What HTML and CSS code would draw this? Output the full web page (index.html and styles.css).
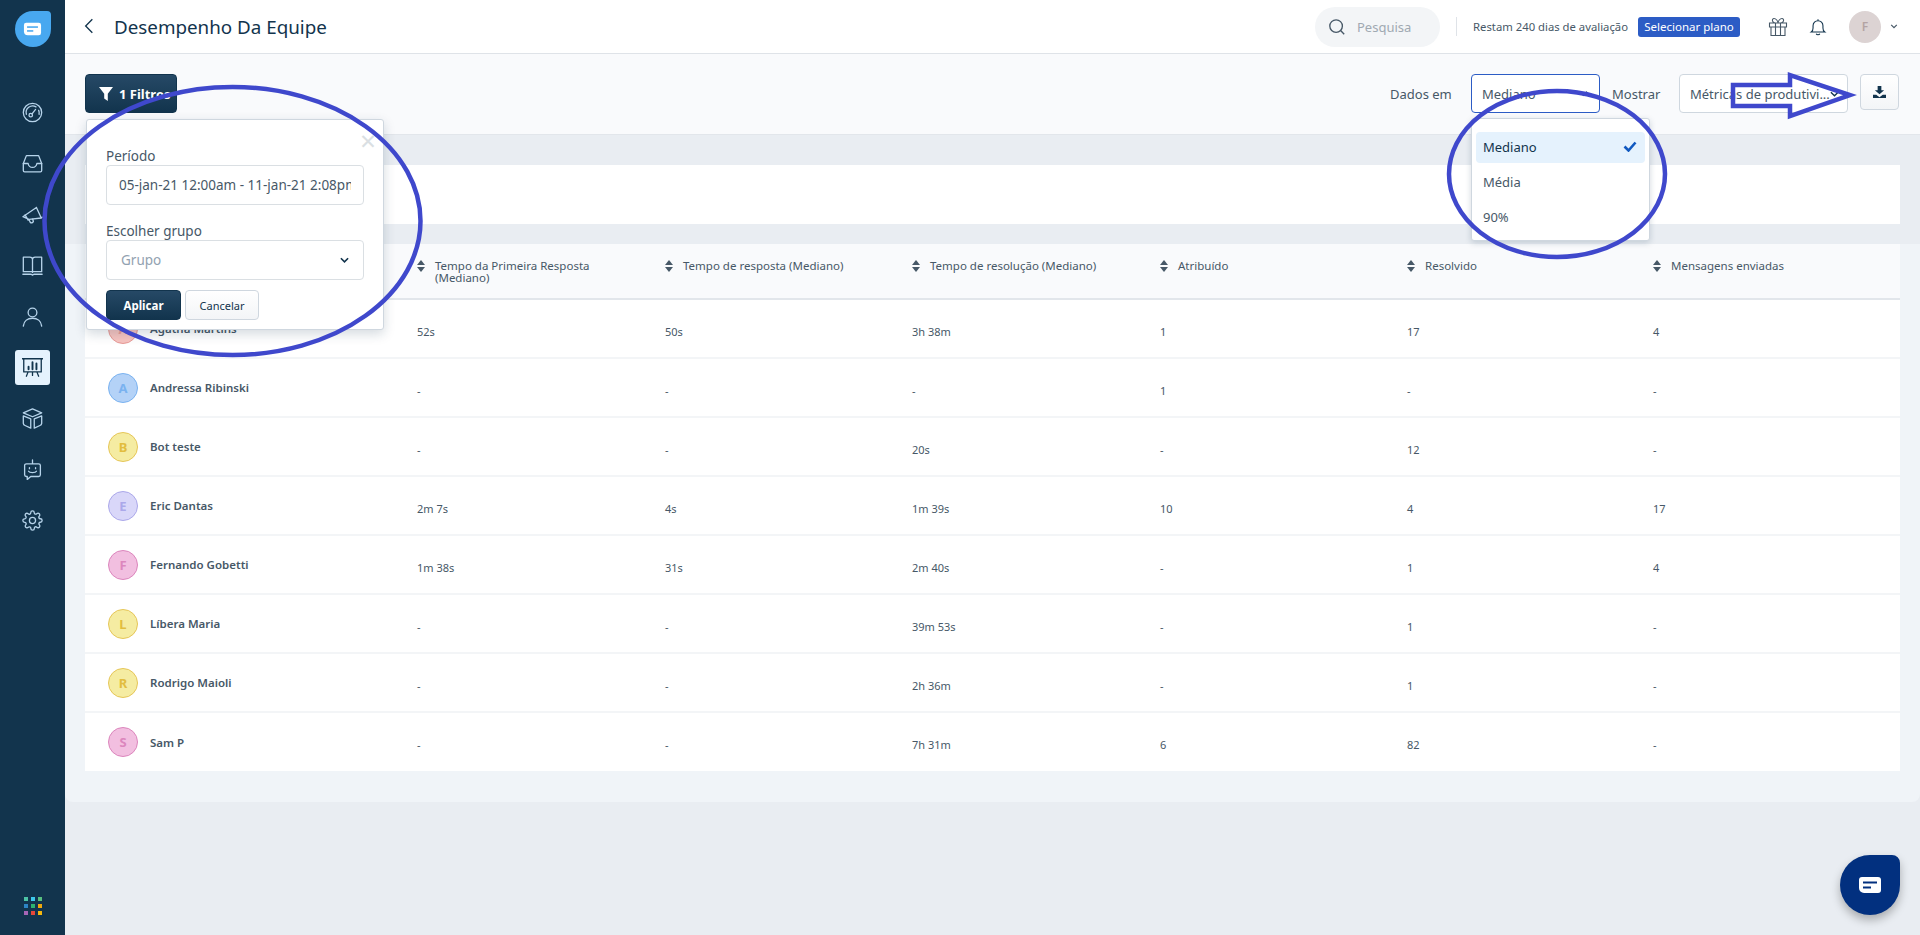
FILE: index.html
```html
<!DOCTYPE html>
<html lang="pt">
<head>
<meta charset="utf-8">
<title>Desempenho Da Equipe</title>
<link rel="stylesheet" href="styles.css">
</head>
<body>
<div class="app">
  <aside class="sidebar">
    <div class="logo">
      <svg viewBox="0 0 24 18" class="logo-bubble"><path d="M4 1h16a3 3 0 0 1 3 3v10a3 3 0 0 1-3 3H6a5 5 0 0 1-5-5V4a3 3 0 0 1 3-3z" fill="#fff"/><path d="M5 6.500h14" stroke="#48a8f0" stroke-width="2"/><path d="M5 11.500h8" stroke="#48a8f0" stroke-width="2"/></svg>
    </div>
    <nav class="nav">
      <a class="nav-item"><svg viewBox="0 0 24 24"><circle cx="12" cy="12" r="10.500"/><path d="M5 14a7.500 7.500 0 0 1 11-8.500M19 9.500a7.500 7.500 0 0 1 .5 4.500"/><circle cx="10" cy="15" r="2"/><path d="M11.500 13.500l4-5"/></svg></a>
      <a class="nav-item"><svg viewBox="0 0 24 24"><path d="M1.500 12l3.500-9h14l3.500 9v8a1.500 1.500 0 0 1-1.500 1.500H3A1.500 1.500 0 0 1 1.500 20z"/><path d="M1.500 12H7c.5 3 2.500 4.500 5 4.500s4.500-1.500 5-4.500h5.500"/></svg></a>
      <a class="nav-item"><svg viewBox="0 0 24 24"><path d="M1 14.500L16.500 4l5.500 12-14 1.500zM3.500 12.500l3.500 6M16.500 4l-1 1M22 16l1-1"/><path d="M8 18l1.500 3a2.200 2.200 0 0 0 3.500-1l-.8-2.800"/></svg></a>
      <a class="nav-item"><svg viewBox="0 0 24 24"><path d="M12 4.500V20M1.500 2.500H9c1.800 0 3 1 3 2.500 0-1.500 1.200-2.500 3-2.500h7.500V19H1.500z"/><path d="M1 22h9.500l1.500 1 1.500-1H23"/></svg></a>
      <a class="nav-item"><svg viewBox="0 0 24 24"><circle cx="12" cy="7.500" r="5"/><path d="M1.500 23c.5-6 5-9 10.500-9s10 3 10.500 9"/></svg></a>
      <a class="nav-item nav-active"><svg viewBox="0 0 24 24"><path d="M0 2h24M2 2v15h20V2M7 17l-2 5M17 17l2 5M12 17v4"/><path d="M7.500 14v-3M12 14V6M16.500 14V7.500" stroke-width="2.200"/></svg></a>
      <a class="nav-item"><svg viewBox="0 0 24 24"><path d="M12 1l10.500 4.500L12 10 1.500 5.500zM1.500 9L10 12.500V23L3.500 20a3 3 0 0 1-2-2.500zM22.500 9L14 12.500V23l6.500-3a3 3 0 0 0 2-2.500z"/></svg></a>
      <a class="nav-item"><svg viewBox="0 0 24 24"><path d="M12 1v4M5 5.500h14a2 2 0 0 1 2 2V18a2 2 0 0 1-2 2h-9l-4 3.500V20H5a2 2 0 0 1-2-2V7.500a2 2 0 0 1 2-2z"/><path d="M7.500 14c1 2 8 2 9 0M8.500 10v1M15.500 10v1"/></svg></a>
      <a class="nav-item"><svg viewBox="0 0 24 24"><path d="M12 15.500a3.500 3.500 0 1 0 0-7 3.500 3.500 0 0 0 0 7z"/><path d="M19.400 15a1.650 1.650 0 0 0 .33 1.820l.06.06a2 2 0 0 1 0 2.830 2 2 0 0 1-2.830 0l-.06-.06a1.650 1.650 0 0 0-1.820-.33 1.650 1.650 0 0 0-1 1.510V21a2 2 0 0 1-2 2 2 2 0 0 1-2-2v-.09A1.650 1.650 0 0 0 9 19.400a1.650 1.650 0 0 0-1.820.33l-.06.06a2 2 0 0 1-2.830 0 2 2 0 0 1 0-2.830l.06-.06a1.650 1.650 0 0 0 .33-1.820 1.650 1.650 0 0 0-1.510-1H3a2 2 0 0 1-2-2 2 2 0 0 1 2-2h.09A1.650 1.650 0 0 0 4.600 9a1.650 1.650 0 0 0-.33-1.820l-.06-.06a2 2 0 0 1 0-2.830 2 2 0 0 1 2.830 0l.06.06a1.650 1.650 0 0 0 1.820.33H9a1.650 1.650 0 0 0 1-1.510V3a2 2 0 0 1 2-2 2 2 0 0 1 2 2v.09a1.650 1.650 0 0 0 1 1.510 1.650 1.650 0 0 0 1.820-.33l.06-.06a2 2 0 0 1 2.830 0 2 2 0 0 1 0 2.830l-.06.06a1.650 1.650 0 0 0-.33 1.820V9a1.650 1.650 0 0 0 1.510 1H21a2 2 0 0 1 2 2 2 2 0 0 1-2 2h-.09a1.650 1.650 0 0 0-1.510 1z"/></svg></a>
    </nav>
    <div class="apps">
      <i class="d1"></i><i class="d2"></i><i class="d3"></i>
      <i class="d4"></i><i class="d5"></i><i class="d6"></i>
      <i class="d7"></i><i class="d8"></i><i class="d9"></i>
    </div>
  </aside>

  <main class="main">
    <header class="topbar">
      <svg class="back" viewBox="0 0 12 20"><path d="M10 2L2 10l8 8"/></svg>
      <h1 class="title">Desempenho Da Equipe</h1>
      <div class="top-right">
        <div class="search">
          <svg viewBox="0 0 20 20"><circle cx="9" cy="9" r="7"/><path d="M14 14l4 4"/></svg>
          <span>Pesquisa</span>
        </div>
        <span class="divider"></span>
        <span class="trial">Restam 240 dias de avaliação</span>
        <a class="plan">Selecionar plano</a>
        <svg class="gift" viewBox="0 0 20 20"><path d="M1.500 6h17v4h-17zM3 10v8.500h14V10M7.500 6v12.500M12.500 6v12.500M7.500 6C4 6 3.500 1.500 6 1.500c2 0 4 2.500 4 4.500 0-2 2-4.500 4-4.500 2.500 0 2 4.500-1.500 4.500"/></svg>
        <svg class="bell" viewBox="0 0 20 20"><path d="M2.500 15.500c1.500-1 2-2 2-4.500V8.500a5.500 5.500 0 0 1 11 0V11c0 2.500.5 3.500 2 4.500zM8 17.500c.5 1.500 3.500 1.500 4 0M10 3V1.500"/></svg>
        <div class="me">F</div>
        <svg class="me-caret" viewBox="0 0 10 6"><path d="M1.500 1L5 4.500 8.500 1"/></svg>
      </div>
    </header>

    <section class="toolbar">
      <button class="filter">
        <svg viewBox="0 0 14 14"><path d="M0 0h14L8.800 6.800V14L5.200 11.500V6.800z"/></svg>1 Filtros
      </button>
      <div class="tools">
        <span class="tool-label">Dados em</span>
        <div class="select select-data">Mediano<svg class="caret" viewBox="0 0 10 6"><path d="M1 5l4-4 4 4"/></svg></div>
        <span class="tool-label tool-show">Mostrar</span>
        <div class="select select-show">Métricas de produtivi...<svg class="caret" viewBox="0 0 10 6"><path d="M1 1l4 4 4-4"/></svg></div>
        <button class="download"><svg viewBox="0 0 14 14"><path d="M5 0h4v4.500h3L7 9 2 4.500h3zM0 9.500h3.500L7 12l3.500-2.500H14V13H0z"/></svg></button>
      </div>
    </section>

    <section class="content">
      <div class="summary"></div>
      <div class="panel">
        <table class="grid">
          <thead>
            <tr>
              <th class="c-name"></th>
              <th class="c1"><span class="th"><span class="sort"></span><span>Tempo da Primeira Resposta (Mediano)</span></span></th>
              <th class="c2"><span class="th"><span class="sort"></span><span>Tempo de resposta (Mediano)</span></span></th>
              <th class="c3"><span class="th"><span class="sort"></span><span>Tempo de resolução (Mediano)</span></span></th>
              <th class="c4"><span class="th"><span class="sort"></span><span>Atribuído</span></span></th>
              <th class="c5"><span class="th"><span class="sort"></span><span>Resolvido</span></span></th>
              <th class="c6"><span class="th"><span class="sort"></span><span>Mensagens enviadas</span></span></th>
            </tr>
          </thead>
          <tbody>
            <tr><td><div class="agent"><span class="av av-red">A</span><b>Agatha Martins</b></div></td><td>52s</td><td>50s</td><td>3h 38m</td><td>1</td><td>17</td><td>4</td></tr>
            <tr><td><div class="agent"><span class="av av-blue">A</span><b>Andressa Ribinski</b></div></td><td>-</td><td>-</td><td>-</td><td>1</td><td>-</td><td>-</td></tr>
            <tr><td><div class="agent"><span class="av av-yellow">B</span><b>Bot teste</b></div></td><td>-</td><td>-</td><td>20s</td><td>-</td><td>12</td><td>-</td></tr>
            <tr><td><div class="agent"><span class="av av-violet">E</span><b>Eric Dantas</b></div></td><td>2m 7s</td><td>4s</td><td>1m 39s</td><td>10</td><td>4</td><td>17</td></tr>
            <tr><td><div class="agent"><span class="av av-pink">F</span><b>Fernando Gobetti</b></div></td><td>1m 38s</td><td>31s</td><td>2m 40s</td><td>-</td><td>1</td><td>4</td></tr>
            <tr><td><div class="agent"><span class="av av-yellow">L</span><b>Líbera Maria</b></div></td><td>-</td><td>-</td><td>39m 53s</td><td>-</td><td>1</td><td>-</td></tr>
            <tr><td><div class="agent"><span class="av av-yellow">R</span><b>Rodrigo Maioli</b></div></td><td>-</td><td>-</td><td>2h 36m</td><td>-</td><td>1</td><td>-</td></tr>
            <tr><td><div class="agent"><span class="av av-pink">S</span><b>Sam P</b></div></td><td>-</td><td>-</td><td>7h 31m</td><td>6</td><td>82</td><td>-</td></tr>
          </tbody>
        </table>
      </div>
    </section>
  </main>
</div>

<div class="popover">
  <span class="pop-close">×</span>
  <label class="pop-label">Período</label>
  <div class="pop-input pop-date"><span>05-jan-21 12:00am - 11-jan-21 2:08pm</span></div>
  <label class="pop-label pop-label-2">Escolher grupo</label>
  <div class="pop-input pop-group">Grupo<svg viewBox="0 0 10 6"><path d="M1 1l4 4 4-4"/></svg></div>
  <div class="pop-actions">
    <button class="btn-apply">Aplicar</button>
    <button class="btn-cancel">Cancelar</button>
  </div>
</div>

<ul class="menu">
  <li class="menu-on">Mediano<svg viewBox="0 0 14 11"><path d="M1.500 5.500l4 4 7-8"/></svg></li>
  <li>Média</li>
  <li>90%</li>
</ul>

<div class="chat">
  <svg viewBox="0 0 24 18"><path d="M4 1h16a3 3 0 0 1 3 3v10a3 3 0 0 1-3 3H6a5 5 0 0 1-5-5V4a3 3 0 0 1 3-3z" fill="#fff"/><path d="M5 6.500h14" stroke="#02307f" stroke-width="2"/><path d="M5 11.500h8" stroke="#02307f" stroke-width="2"/></svg>
</div>

<svg class="ink" viewBox="0 0 1920 935">
  <ellipse cx="232.500" cy="221" rx="188" ry="134"/>
  <ellipse cx="1557" cy="174" rx="108" ry="83"/>
  <path d="M1733 85h57V75l60 20-60 21v-10h-57z"/>
</svg>
</body>
</html>
```

FILE: styles.css
```css
* { box-sizing: border-box; }
html, body { margin: 0; height: 100%; }
body {
  width: 1920px;
  height: 935px;
  overflow: hidden;
  font-family: "Noto Sans", "Open Sans", sans-serif;
  color: #475867;
  position: relative;
}
button { font-family: inherit; cursor: pointer; }

.app { display: flex; height: 935px; }

/* sidebar */
.sidebar {
  width: 65px;
  flex: none;
  background: #12344d;
  display: flex;
  flex-direction: column;
  align-items: center;
  padding: 11px 0 20px;
}
.logo {
  width: 36px;
  height: 36px;
  flex: none;
  background: #48a8f0;
  border-radius: 50% 4px 50% 50%;
  display: flex;
  align-items: center;
  justify-content: center;
}
.logo-bubble { width: 19px; height: 14px; }
.logo-bubble path:nth-child(n+2) { fill: none; }
.nav {
  display: flex;
  flex-direction: column;
  gap: 16px;
  margin-top: 48px;
}
.nav-item {
  width: 35px;
  height: 35px;
  display: flex;
  align-items: center;
  justify-content: center;
  border-radius: 3px;
}
.nav-item svg {
  width: 21px;
  height: 21px;
  fill: none;
  stroke: #b6d3ea;
  stroke-width: 1.500;
  stroke-linejoin: round;
  stroke-linecap: round;
}
.nav-active { background: #e5f2fd; }
.nav-active svg { stroke: #12344d; }
.apps {
  margin-top: auto;
  display: grid;
  grid-template-columns: repeat(3, 4px);
  grid-auto-rows: 4px;
  gap: 3px;
}
.d1 { background: #4cc3a5; } .d2 { background: #3ec7ea; } .d3 { background: #58bf7f; }
.d4 { background: #2d84c4; } .d5 { background: #2cb36f; } .d6 { background: #efa90e; }
.d7 { background: #a565b5; } .d8 { background: #e5473a; } .d9 { background: #f4b70f; }

/* main */
.main {
  flex: 1;
  min-width: 0;
  background: #e9edf2;
  display: flex;
  flex-direction: column;
}
.topbar {
  height: 54px;
  flex: none;
  background: #fff;
  border-bottom: 1px solid #dfe3e8;
  display: flex;
  align-items: center;
  padding-left: 19px;
}
.back { width: 10px; height: 18px; fill: none; stroke: #12344d; stroke-width: 1.600; flex: none; margin-top: -2px; }
.title {
  margin: 0 0 0 20px;
  font-size: 18.800px;
  font-weight: 400;
  color: #12344d;
  line-height: 28px;
}
.top-right {
  margin-left: auto;
  display: flex;
  align-items: center;
  padding-right: 22px;
}
.search {
  width: 125px;
  height: 40px;
  background: #f3f5f7;
  border-radius: 20px;
  display: flex;
  align-items: center;
  padding-left: 13px;
  gap: 11px;
  font-size: 13px;
  color: #a0a9b2;
}
.search svg { width: 18px; height: 18px; fill: none; stroke: #475867; stroke-width: 1.500; }
.divider { width: 1px; height: 19px; background: #dfe3e8; margin: 0 16px; }
.trial { font-size: 11.300px; color: #475867; width: 165px; white-space: nowrap; }
.plan {
  width: 102px;
  height: 20px;
  background: #2c5cc5;
  border-radius: 3px;
  color: #fff;
  font-size: 11.500px;
  line-height: 20px;
  text-align: center;
  white-space: nowrap;
}
.gift { width: 20px; height: 20px; margin-left: 28px; fill: none; stroke: #475867; stroke-width: 1.100; }
.bell { width: 18px; height: 18px; margin-left: 21px; fill: none; stroke: #12344d; stroke-width: 1.200; }
.me {
  width: 32px;
  height: 32px;
  border-radius: 50%;
  background: #dcd3d3;
  color: #b3a3a3;
  font-size: 12px;
  font-weight: 600;
  display: flex;
  align-items: center;
  justify-content: center;
  margin-left: 22px;
}
.me-caret { width: 8px; height: 5px; margin-left: 9px; fill: none; stroke: #475867; stroke-width: 1.500; }

/* toolbar */
.toolbar {
  height: 81px;
  flex: none;
  background: #f9fafc;
  border-bottom: 1px solid #e2e6eb;
  display: flex;
  align-items: flex-start;
  padding: 20px 21px 0 20px;
}
.filter {
  width: 92px;
  height: 39px;
  border: 1px solid #12344d;
  border-radius: 4px;
  background: linear-gradient(#264966, #12344d);
  color: #fff;
  font-size: 13px;
  font-weight: 700;
  display: flex;
  align-items: center;
  padding: 0 0 0 13px;
  gap: 6px;
  white-space: nowrap;
}
.filter svg { width: 14px; height: 14px; fill: #fff; flex: none; }
.tools { margin-left: auto; display: flex; align-items: center; }
.tool-label { font-size: 13px; color: #475867; width: 61px; white-space: nowrap; margin-right: 20px; }
.tool-show { width: 48px; margin: 0 19px 0 12px; }
.select {
  height: 39px;
  background: #fff;
  border: 1px solid #cfd7df;
  border-radius: 4px;
  font-size: 13px;
  color: #475867;
  display: flex;
  align-items: center;
  padding: 0 8px 0 10px;
  white-space: nowrap;
}
.select-data { width: 129px; border-color: #2c5cc5; }
.select-show { width: 169px; }
.caret { width: 9px; height: 6px; margin-left: auto; fill: none; stroke: #12344d; stroke-width: 1.500; }
.download {
  width: 39px;
  height: 36px;
  margin-left: 12px;
  align-self: flex-start;
  background: linear-gradient(#fff, #f3f5f7);
  border: 1px solid #cfd7df;
  border-radius: 4px;
  padding: 0;
  display: flex;
  align-items: center;
  justify-content: center;
}
.download svg { width: 13px; height: 13px; fill: #12344d; }

/* content */
.content { padding-top: 30px; }
.summary { height: 59px; margin: 0 20px; background: #fff; }
.panel {
  margin-top: 20px;
  height: 558px;
  background: #f0f4f8;
  border-radius: 0 0 8px 8px;
  padding-left: 20px;
}
.grid {
  width: 1815px;
  table-layout: fixed;
  border-collapse: separate;
  border-spacing: 0;
  font-size: 11px;
}
.grid th {
  height: 56px;
  background: #f9fafc;
  border-bottom: 2px solid #e2e6eb;
  padding: 16px 0 0;
  vertical-align: top;
  text-align: left;
  font-weight: 400;
  font-size: 11.500px;
  line-height: 12px;
}
.grid td {
  height: 59px;
  padding: 0;
  background: #fff;
  border-bottom: 2px solid #f3f5f7;
  color: #475867;
}
.grid td + td { padding-top: 5px; }
.grid tr:last-child td { height: 58px; border-bottom: 0; }
.c-name { width: 332px; }
.c1 { width: 248px; }
.c2 { width: 247px; }
.c3 { width: 248px; }
.c4 { width: 247px; }
.c5 { width: 246px; }
.c6 { width: 247px; }
.th { display: flex; gap: 9px; width: 210px; }
.sort {
  flex: none;
  width: 9px;
  height: 12px;
  display: flex;
  flex-direction: column;
  justify-content: space-between;
}
.sort::before,
.sort::after {
  content: "";
  width: 0;
  height: 0;
  border-left: 4.500px solid transparent;
  border-right: 4.500px solid transparent;
}
.sort::before { border-bottom: 5px solid #475867; }
.sort::after { border-top: 5px solid #475867; }
.agent { display: flex; align-items: center; gap: 12px; padding-left: 23px; }
.agent b { font-weight: 600; font-size: 11.500px; }
.av {
  width: 30px;
  height: 30px;
  border-radius: 50%;
  border: 1px solid;
  display: flex;
  align-items: center;
  justify-content: center;
  font-size: 13px;
  font-weight: 700;
  flex: none;
}
.av-red { background: #f7c4c0; border-color: #e89a96; color: #e89a96; }
.av-blue { background: #b4d2f7; border-color: #7ab2f0; color: #7ab2f0; }
.av-yellow { background: #f5eca2; border-color: #e6c658; color: #e2bd3f; }
.av-violet { background: #d9d7f9; border-color: #aba8ea; color: #aba8ea; }
.av-pink { background: #f2bfe0; border-color: #dc86bd; color: #dc86bd; }

/* floating layers */
.popover {
  position: absolute;
  left: 86px;
  top: 119px;
  width: 298px;
  height: 211px;
  background: #fff;
  border: 1px solid #cfd7df;
  border-radius: 3px;
  box-shadow: 0 4px 12px rgba(18, 52, 77, .18);
  padding: 27px 19px 0;
}
.pop-close {
  position: absolute;
  right: 7px;
  top: 6px;
  font-size: 28px;
  line-height: 28px;
  color: #dadfe3;
}
.pop-label { display: block; font-size: 13.500px; line-height: 18px; color: #475867; }
.pop-label-2 { margin-top: 17px; }
.pop-input {
  height: 40px;
  margin-top: 0;
  border: 1px solid #dadfe3;
  border-radius: 4px;
  font-size: 13.500px;
  display: flex;
  align-items: center;
  white-space: nowrap;
  overflow: hidden;
}
.pop-date { padding: 0 12px; color: #475867; }
.pop-date span { display: block; overflow: hidden; }
.pop-group { padding: 0 14px 0 14px; color: #92a2b1; justify-content: space-between; }
.pop-group svg { width: 9px; height: 6px; fill: none; stroke: #12344d; stroke-width: 1.800; }
.pop-actions { display: flex; gap: 4px; margin-top: 10px; }
.btn-apply {
  width: 75px;
  height: 30px;
  background: linear-gradient(#264966, #12344d);
  border: 1px solid #12344d;
  border-radius: 4px;
  color: #fff;
  font-size: 11.500px;
  font-weight: 700;
  padding: 0;
}
.btn-cancel {
  width: 74px;
  height: 30px;
  background: linear-gradient(#fff, #f3f5f7);
  border: 1px solid #cfd7df;
  border-radius: 4px;
  color: #12344d;
  font-size: 11px;
  padding: 0;
}
.menu {
  position: absolute;
  left: 1471px;
  top: 118px;
  width: 179px;
  height: 123px;
  margin: 0;
  padding: 13px 4px 0;
  list-style: none;
  background: #fff;
  border: 1px solid #cfd7df;
  border-radius: 3px;
  box-shadow: 0 2px 6px rgba(18, 52, 77, .18);
  font-size: 13px;
  color: #12344d;
}
.menu li {
  height: 31px;
  margin-bottom: 4px;
  padding: 0 8px 2px 7px;
  display: flex;
  align-items: center;
  justify-content: space-between;
  border-radius: 4px;
  color: #475867;
}
.menu .menu-on { background: #e5f2fd; color: #12344d; }
.menu svg { width: 14px; height: 11px; fill: none; stroke: #1159c0; stroke-width: 2.600; }
.chat {
  position: absolute;
  left: 1840px;
  top: 855px;
  width: 60px;
  height: 60px;
  background: #02307f;
  border-radius: 50% 8px 50% 50%;
  box-shadow: 0 5px 10px rgba(0, 0, 0, .28);
  display: flex;
  align-items: center;
  justify-content: center;
}
.chat svg { width: 24px; height: 18px; }
.chat path:nth-child(n+2) { fill: none; }
.ink {
  position: absolute;
  left: 0;
  top: 0;
  width: 1920px;
  height: 935px;
  pointer-events: none;
  fill: none;
  stroke: #3f48cc;
  stroke-width: 4.500;
}
```
